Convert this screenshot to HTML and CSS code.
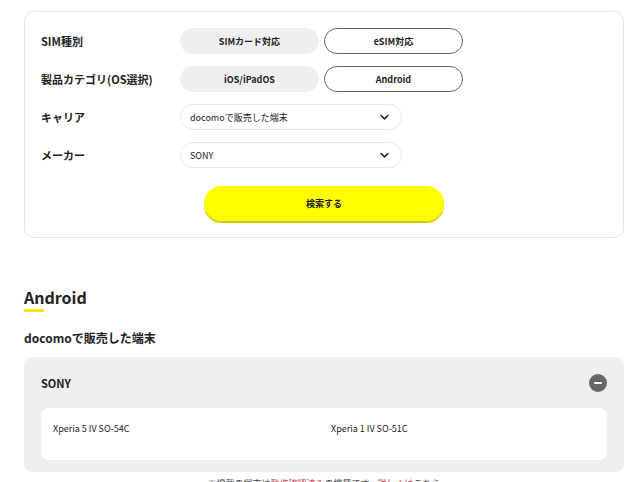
FILE: index.html
```html
<!DOCTYPE html>
<html lang="ja">
<head>
    <meta charset="UTF-8">
    <meta name="viewport" content="width=device-width, initial-scale=1.0">
    <title>対応端末一覧</title>
    <link rel="stylesheet" href="styles.css">
</head>
<body>
    <div class="page">
        <form class="search-card">
            <div class="search-row">
                <div class="search-label">SIM種別</div>
                <div class="toggle-group">
                    <button type="button" class="toggle active">SIMカード対応</button>
                    <button type="button" class="toggle">eSIM対応</button>
                </div>
            </div>
            <div class="search-row">
                <div class="search-label">製品カテゴリ(OS選択)</div>
                <div class="toggle-group">
                    <button type="button" class="toggle active">iOS/iPadOS</button>
                    <button type="button" class="toggle">Android</button>
                </div>
            </div>
            <div class="search-row">
                <div class="search-label">キャリア</div>
                <div class="select-box">
                    <span>docomoで販売した端末</span>
                    <svg class="chevron" viewBox="0 0 10 7" width="9" height="7"><path d="M1.2 1.3 5 5 8.8 1.3" fill="none" stroke="#222" stroke-width="1.8" stroke-linecap="round" stroke-linejoin="round"/></svg>
                </div>
            </div>
            <div class="search-row">
                <div class="search-label">メーカー</div>
                <div class="select-box">
                    <span>SONY</span>
                    <svg class="chevron" viewBox="0 0 10 7" width="9" height="7"><path d="M1.2 1.3 5 5 8.8 1.3" fill="none" stroke="#222" stroke-width="1.8" stroke-linecap="round" stroke-linejoin="round"/></svg>
                </div>
            </div>
            <div class="search-submit">
                <button type="button" class="submit-button">検索する</button>
            </div>
        </form>

        <h2 class="section-title">Android</h2>
        <h3 class="carrier-title">docomoで販売した端末</h3>

        <div class="maker-block">
            <div class="maker-head">
                <span>SONY</span>
                <span class="collapse-icon"></span>
            </div>
            <ul class="device-list">
                <li>Xperia 5 IV SO-54C</li>
                <li>Xperia 1 IV SO-51C</li>
            </ul>
        </div>

        <p class="note">※掲載の端末は<span class="red">動作確認済み</span>の機種です。<span class="red">詳しくは</span>こちら</p>
    </div>
</body>
</html>
```

FILE: styles.css
```css
body {
    margin: 0;
    font-family: "Noto Sans CJK JP", "Noto Sans", sans-serif;
    color: #222;
    background: #fff;
}
.page {
    padding: 11px 16px 0 24px;
}
.search-card {
    border: 1px solid #e6e6e6;
    border-radius: 10px;
    padding: 16px;
    display: flex;
    flex-direction: column;
    gap: 12px;
}
.search-row {
    display: grid;
    grid-template-columns: 139px auto;
    align-items: center;
}
.search-label {
    font-size: 11px;
    font-weight: 700;
}
.toggle-group {
    display: flex;
    gap: 5px;
}
.toggle {
    width: 139px;
    height: 26px;
    border-radius: 13px;
    border: 1px solid #666;
    background: #fff;
    font-family: inherit;
    font-size: 9px;
    font-weight: 700;
    color: #222;
    padding: 0;
}
.toggle.active {
    background: #efefef;
    border-color: #efefef;
}
.select-box {
    width: 222px;
    height: 26px;
    box-sizing: border-box;
    border: 1px solid #eaeaea;
    border-radius: 13px;
    display: flex;
    align-items: center;
    justify-content: space-between;
    padding: 0 12px 0 9px;
    font-size: 9px;
}
.search-submit {
    display: flex;
    justify-content: center;
    margin-top: 6px;
}
.submit-button {
    width: 240px;
    height: 35px;
    border: none;
    border-radius: 18px;
    background: #ffff00;
    box-shadow: 0 2px 0 #d8c800;
    font-family: inherit;
    font-size: 9px;
    font-weight: 700;
    color: #222;
}
.section-title {
    margin: 48px 0 0;
    font-size: 16px;
    font-weight: 700;
    line-height: 22px;
}
.section-title::after {
    content: "";
    display: block;
    width: 20px;
    height: 3px;
    background: #ffe600;
    margin-top: 1px;
}
.carrier-title {
    margin: 17px 0 0;
    font-size: 12px;
    font-weight: 700;
    line-height: 18px;
}
.maker-block {
    margin-top: 10px;
    background: #efefef;
    border-radius: 8px;
    padding: 0 17px 12px;
}
.maker-head {
    height: 51px;
    display: flex;
    align-items: center;
    justify-content: space-between;
    font-size: 11px;
    font-weight: 700;
}
.collapse-icon {
    width: 18px;
    height: 18px;
    border-radius: 50%;
    background: #676767;
    position: relative;
}
.collapse-icon::before {
    content: "";
    position: absolute;
    left: 5px;
    top: 8px;
    width: 8px;
    height: 2px;
    border-radius: 1px;
    background: #fff;
}
.device-list {
    list-style: none;
    margin: 0;
    padding: 0 12px;
    background: #fff;
    border-radius: 8px;
    height: 52px;
    display: grid;
    grid-template-columns: 278px 1fr;
    align-items: start;
}
.device-list li {
    font-size: 9px;
    padding-top: 14px;
}
.note {
    margin: 5px 0 0;
    text-align: center;
    font-size: 9px;
    color: #444;
}
.red {
    color: #c8313e;
}
```
